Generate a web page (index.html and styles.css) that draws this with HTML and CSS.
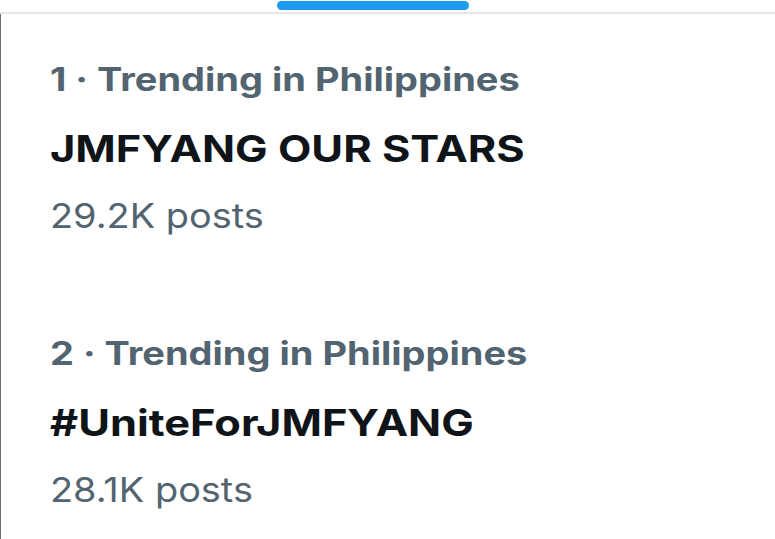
FILE: index.html
```html
<!DOCTYPE html>
<html>
<head>
<meta charset="utf-8">
<link rel="stylesheet" href="styles.css">
</head>
<body>
<div class="tabbar"><div class="indicator"></div></div>
<main class="list">
  <section class="trend">
    <div class="meta">1 · Trending in Philippines</div>
    <div class="title">JMFYANG OUR STARS</div>
    <div class="count">29.2K posts</div>
  </section>
  <section class="trend">
    <div class="meta">2 · Trending in Philippines</div>
    <div class="title">#UniteForJMFYANG</div>
    <div class="count">28.1K posts</div>
  </section>
</main>
</body>
</html>
```
FILE: styles.css
```css
html, body {
  margin: 0;
  padding: 0;
  background: #ffffff;
  font-family: Inter, "Liberation Sans", sans-serif;
}
body {
  width: 775px;
  height: 539px;
  overflow: hidden;
}
.tabbar {
  height: 12px;
  border-bottom: 2px solid #e3e7e8;
  display: flex;
  align-items: flex-start;
}
.indicator {
  margin-left: 277px;
  margin-top: 1px;
  width: 192px;
  height: 9px;
  border-radius: 5px;
  background: #1d9bf0;
}
.list {
  border-left: 1px solid #6e6e6e;
  height: 525px;
  padding-left: 49px;
  box-sizing: border-box;
}
.trend {
  padding-top: 46px;
  height: 274px;
  box-sizing: border-box;
}
.meta, .title, .count {
  width: max-content;
  white-space: nowrap;
  transform-origin: 0 50%;
}
.meta {
  color: #536471;
  font-weight: 700;
  font-size: 32px;
  line-height: 40px;
  transform: scaleX(1.187);
}
.title {
  color: #0f1419;
  font-weight: 700;
  font-size: 37px;
  line-height: 44px;
  margin-top: 27px;
  transform: scaleX(1.173);
}
.count {
  color: #536471;
  font-size: 34px;
  line-height: 40px;
  margin-top: 25px;
  transform: scaleX(1.115);
}
```
